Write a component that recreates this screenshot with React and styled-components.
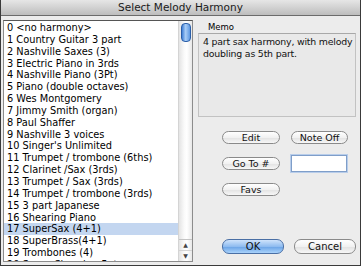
import styled, { createGlobalStyle } from 'styled-components';

const harmonies = [
  '0 <no harmony>',
  '1 Country Guitar 3 part',
  '2 Nashville Saxes (3)',
  '3 Electric Piano in 3rds',
  '4 Nashville Piano (3Pt)',
  '5 Piano (double octaves)',
  '6 Wes Montgomery',
  '7 Jimmy Smith (organ)',
  '8 Paul Shaffer',
  '9 Nashville 3 voices',
  "10 Singer's Unlimited",
  '11 Trumpet / trombone (6ths)',
  '12 Clarinet /Sax (3rds)',
  '13 Trumpet / Sax (3rds)',
  '14 Trumpet / trombone (3rds)',
  '15 3 part Japanese',
  '16 Shearing Piano',
  '17 SuperSax (4+1)',
  '18 SuperBrass(4+1)',
  '19 Trombones (4)',
  '20 Super Shearing 5pt',
];

const GlobalStyle = createGlobalStyle`
  body {
    margin: 0;
    background: #ececec;
    font-family: "DejaVu Sans", "Lucida Grande", sans-serif;
  }
`;

const Window = styled.div`
  width: 361px;
  height: 266px;
  box-sizing: border-box;
  border: 1px solid #3a3a3a;
  border-top: none;
  background: #ececec;
  display: flex;
  flex-direction: column;
  overflow: hidden;
`;

const TitleBar = styled.div`
  height: 15px;
  flex: none;
  background: linear-gradient(#e6e6e6, #bdbdbd);
  border-bottom: 1px solid #6b6b6b;
  font-size: 10.5px;
  line-height: 15px;
  text-align: center;
  color: #1a1a1a;
`;

const Body = styled.div`
  flex: 1;
  display: flex;
  padding: 4px 4px 0 2px;
  gap: 5px;
`;

const ListBox = styled.div`
  width: 192px;
  height: 242px;
  box-sizing: border-box;
  border: 1px solid #8c8c8c;
  border-top-color: #555;
  background: #fff;
  display: flex;
  overflow: hidden;
`;

const Items = styled.div`
  flex: 1;
  padding-top: 1px;
`;

const Item = styled.div`
  height: 11.85px;
  line-height: 11.85px;
  font-size: 9.8px;
  padding-left: 3px;
  white-space: nowrap;
  color: #000;
  background: ${p => (p.$selected ? '#c3d6f0' : 'transparent')};
`;

const ScrollTrack = styled.div`
  width: 13px;
  flex: none;
  background: linear-gradient(90deg, #e4e4e4, #fafafa 40%, #ffffff 60%, #e8e8e8);
  border-left: 1px solid #d4d4d4;
  display: flex;
  flex-direction: column;
  align-items: center;
`;

const Thumb = styled.div`
  width: 8px;
  height: 17px;
  margin-top: 2px;
  border-radius: 4px;
  border: 1px solid #2c5fa8;
  background: linear-gradient(90deg, #3f7fd6, #a9cdf6 45%, #5d98e2);
`;

const Arrows = styled.div`
  margin-top: auto;
  width: 100%;
  border-top: 1px solid #c4c4c4;
  display: flex;
  flex-direction: column;
  align-items: center;
  font-size: 6px;
  color: #444;
`;

const Arrow = styled.div`
  height: 10px;
  line-height: 10px;
  width: 100%;
  text-align: center;
  & + & {
    border-top: 1px solid #d4d4d4;
  }
`;

const RightPanel = styled.div`
  flex: 1;
  display: flex;
  flex-direction: column;
`;

const MemoLabel = styled.div`
  font-size: 8.5px;
  padding-left: 10px;
  height: 12px;
  line-height: 12px;
  margin-top: 1px;
`;

const MemoBox = styled.div`
  height: 84px;
  box-sizing: border-box;
  border: 1px solid #c2c2c2;
  border-top-color: #a8a8a8;
  background: #e9e9e9;
  padding: 2px 0 2px 4px;
  font-size: 9.4px;
  letter-spacing: -0.2px;
  line-height: 11.5px;
  color: #111;
`;

const Controls = styled.div`
  display: grid;
  grid-template-columns: 58px 57px;
  column-gap: 11px;
  row-gap: 11px;
  margin: 14px 0 0 24px;
  align-items: center;
`;

const Button = styled.div`
  height: 13px;
  box-sizing: border-box;
  border-radius: 7px;
  border: 1px solid ${p => (p.$primary ? '#4a6fa5' : '#8a8a8a')};
  background: ${p =>
    p.$primary
      ? 'linear-gradient(#cfe3fb, #8fbcf0 50%, #6aa3e6 52%, #a9d2fb)'
      : 'linear-gradient(#ffffff, #f1f1f1 50%, #e2e2e2 52%, #f7f7f7)'};
  font-size: 9.5px;
  line-height: 11px;
  text-align: center;
  color: #111;
`;

const NumberInput = styled.input`
  width: 56px;
  height: 17px;
  box-sizing: border-box;
  border: 1px solid #7f9ec9;
  box-shadow: 0 0 0 1px #b8cdea;
  background: #fff;
  padding: 0;
  outline: none;
`;

const Footer = styled.div`
  margin-top: auto;
  display: flex;
  gap: 10px;
  padding: 0 0 11px 24px;
`;

const FooterButton = styled(Button)`
  width: 62px;
  height: 15px;
  line-height: 13px;
  font-size: 10px;
`;

export default function App() {
  return (
    <>
      <GlobalStyle />
      <Window>
        <TitleBar>Select Melody Harmony</TitleBar>
        <Body>
          <ListBox>
            <Items>
              {harmonies.map((h, i) => (
                <Item key={h} $selected={i === 17}>{h}</Item>
              ))}
            </Items>
            <ScrollTrack>
              <Thumb />
              <Arrows>
                <Arrow>▲</Arrow>
                <Arrow>▼</Arrow>
              </Arrows>
            </ScrollTrack>
          </ListBox>
          <RightPanel>
            <MemoLabel>Memo</MemoLabel>
            <MemoBox>4 part sax harmony, with melody doubling as 5th part.</MemoBox>
            <Controls>
              <Button>Edit</Button>
              <Button>Note Off</Button>
              <Button>Go To #</Button>
              <NumberInput />
              <Button>Favs</Button>
            </Controls>
            <Footer>
              <FooterButton $primary>OK</FooterButton>
              <FooterButton>Cancel</FooterButton>
            </Footer>
          </RightPanel>
        </Body>
      </Window>
    </>
  );
}
